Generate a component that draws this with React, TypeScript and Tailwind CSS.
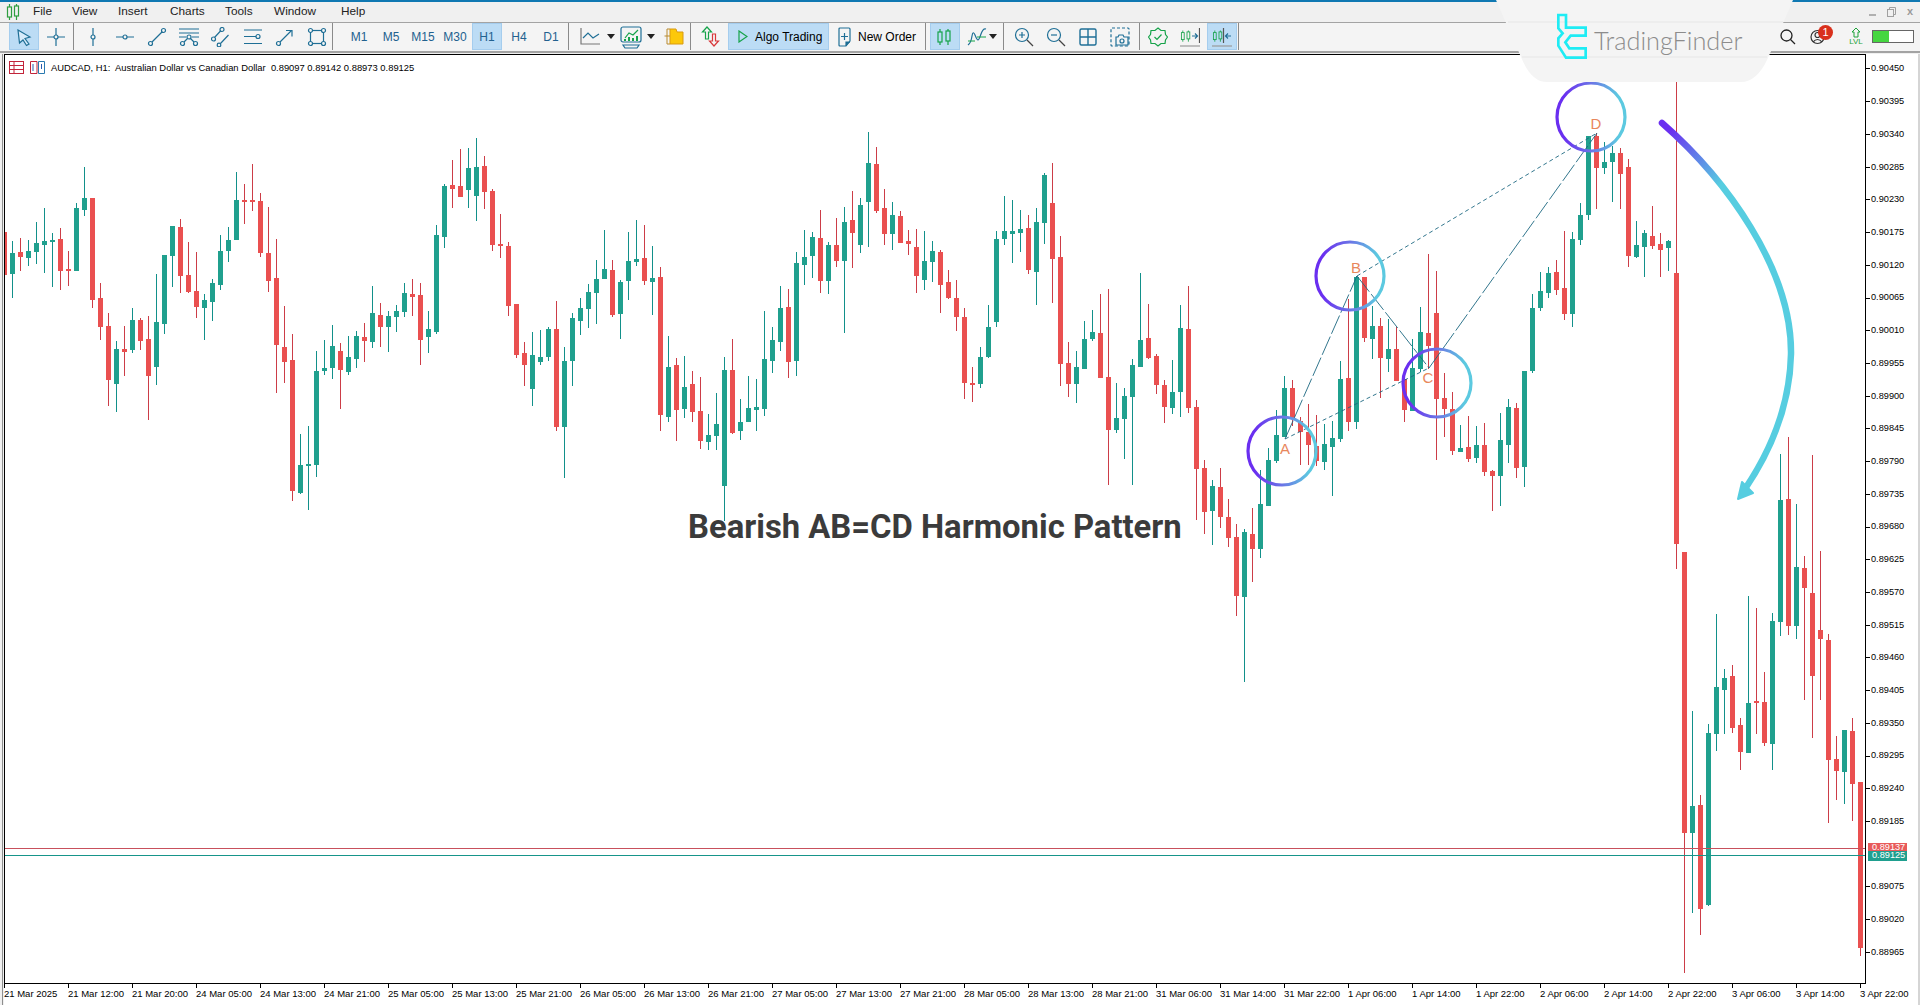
import React from 'react';

type Candle = ['g' | 'r', number, number, number, number];

// candle rows: colour, high, body top, body bottom, low (measured from crops)
const chunks: { y0: number; s: number; rows: Candle[] }[] = [
  {
    y0: 120,
    s: 3,
    rows: [
      ['r',340,340,467,467],['g',366,402,464,536],['r',357,400,413,456],['g',363,396,416,440],['g',309,372,398,434],
      ['g',267,366,377,461],['g',342,364,368,503],['r',327,360,455,512],['r',396,451,455,500],['g',252,267,455,455],
      ['g',144,237,272,290],['r',237,237,542,566],['r',492,537,623,662],['r',582,621,782,860],['g',666,690,794,878],
      ['r',621,690,698,770],['g',567,603,692,701],['r',597,603,665,692],['r',591,660,770,902],['g',465,609,743,797],
      ['g',408,408,614,644],['g',321,321,410,503],['r',300,324,470,521],['r',369,468,519,521],['r',399,516,564,596],
      ['g',525,543,566,662],['g',480,492,548,605],['g',348,396,497,512],['g',324,363,395,428],['g',159,243,362,362],
      ['r',195,243,248,314],['r',135,243,248,275],['r',222,246,401,413],['r',264,402,485,518],['r',360,477,677,821],
      ['r',561,684,728,791],['r',645,723,1115,1145],['g',945,1038,1121,1124],['g',921,1036,1038,1172],['g',696,756,1037,1073],
      ['g',663,747,755,767],['g',618,681,746,779],['r',672,696,752,869],['g',651,714,758,767],['g',636,651,719,746],
      ['r',612,654,666,728],['g',501,582,668,686],['r',552,588,623,683],['g',576,591,623,698],['g',558,576,593,638],
      ['g',492,522,578,593],['r',480,525,533,590],['r',492,528,662,737],['g',576,630,653,701],['g',318,348,638,644],
      ['g',195,201,353,386],['r',123,198,209,266],['r',90,201,233,233],['g',87,147,212,266],['g',57,144,230,305],
      ['r',111,141,218,269],['r',210,216,377,395],['r',285,375,377,416],['r',369,381,560,590],['r',555,555,707,716],
      ['r',669,702,737,800],['g',639,708,809,860],['g',633,714,729,737],['g',624,630,713,725],['r',546,630,923,935],
      ['g',684,726,923,1076],['g',582,597,725,800],['g',537,567,605,647],['g',495,519,569,626],['g',423,480,521,614],
      ['g',333,450,479,479],['r',423,453,587,593],['g',483,489,584,659],['g',339,426,485,542],['g',303,420,428,440],
      ['r',318,417,485,497],['g',381,477,488,587],['r',444,474,887,935],['g',651,744,893,908],['r',717,738,872,965],
      ['g',711,804,869,896],['r',756,795,878,908],['r',774,876,965,989],['g',885,948,968,992],['g',822,915,950,992],
      ['g',714,753,1100,1206],['r',660,753,941,944],['g',840,909,935,962],['g',771,867,908,908],['g',780,864,872,935],
      ['g',576,720,869,890],['g',624,663,725,761],['g',501,567,668,695],['r',510,564,728,776],['g',399,432,725,770],
      ['g',333,414,437,497],['g',339,354,410,476],['r',273,357,485,521],['g',369,378,485,524],['r',297,378,425,443],
      ['g',264,309,425,641],['r',216,303,341,446],['g',237,258,377,401],['g',39,132,248,383],['r',84,135,275,281],
      ['r',210,267,344,377],['g',249,288,344,392],['r',276,291,371,371],['r',333,366,374,407],['r',330,384,470,521],
      ['g',336,426,482,512],['g',366,396,428,488],['r',393,399,497,581],['r',453,489,536,539],['r',483,537,593,635],
      ['r',567,594,791,839],['r',743,792,797,848],['g',684,714,794,806],['g',558,624,714,716],['g',336,360,608,623],
      ['g',231,336,359,377],['g',243,336,344,431],['g',273,330,342,398],['r',288,327,452,464],['g',267,309,458,557],
      ['g',162,168,311,374],['r',132,252,419,551],['r',351,414,734,800],['r',669,732,794,833],['g',696,744,794,851],
      ['g',606,660,749,749],['g',573,639,659,665],['r',525,642,776,776],['r',510,774,932,1097],['g',792,897,932,941],
      ['g',807,831,899,1019],['g',720,738,833,1097],['g',462,663,743,743],['r',555,657,716,719],['r',705,711,797,824],
      ['r',783,798,863,911],['g',723,819,866,884],['g',558,627,818,893],['r',501,630,866,881],
    ],
  },
  {
    y0: 440,
    s: 3,
    rows: [
      ['r',-117,-96,89,242],['r',63,87,218,284],['g',123,141,215,317],['r',87,144,233,266],['r',180,234,296,323],
      ['r',255,294,470,530],['g',270,279,473,728],['r',207,285,329,428],['g',93,195,331,356],['g',27,63,200,200],
    ],
  },
  {
    y0: 60,
    s: 3,
    rows: [
      ['g',1053,1128,1205,1211],['g',951,987,1133,1133],['r',963,987,1078,1100],['r',1075,1085,1120,1217],['r',1035,1120,1157,1217],
      ['r',1068,1160,1205,1220],['g',1095,1155,1208,1232],['g',1086,1137,1163,1310],['g',906,960,1140,1148],['r',720,957,1088,1115],
      ['g',650,654,1088,1109],['r',654,654,836,848],['g',740,801,839,899],['r',777,801,896,1016],['g',780,870,899,938],
      ['r',804,870,965,965],['r',960,960,1052,1088],['g',840,927,1055,1055],['g',744,819,929,938],['r',585,822,860,930],
      ['r',636,762,1019,1202],['r',942,1017,1049,1133],['r',999,1050,1175,1187],['g',1098,1167,1178,1178],['r',1071,1164,1199,1208],
      ['g',1101,1158,1196,1211],['r',1092,1158,1238,1250],['r',1233,1236,1250,1355],['g',1062,1143,1250,1340],['g',1020,1044,1157,1211],
      ['r',1032,1047,1226,1256],['g',936,936,1223,1283],['g',705,747,935,941],['g',639,696,747,755],['g',624,642,702,716],
      ['r',603,639,693,708],['r',516,687,764,782],['g',519,540,764,803],['g',432,468,542,557],['g',230,231,467,482],
      ['r',222,231,326,449],['g',249,309,326,344],['g',260,282,308,428],['r',267,282,344,449],['r',300,324,590,623],
      ['g',486,558,593,596],['g',513,522,563,653],['r',441,531,561,569],['r',522,555,572,653],['g',543,546,566,635],
    ],
  },
  { y0: 0, s: 1, rows: [['r',72,274,545,570]] },
  {
    y0: 440,
    s: 2.775,
    rows: [
      ['r',314,314,1092,1481],['g',755,1019,1092,1314],['r',988,1016,1303,1376],['g',791,816,1293,1297],['g',486,688,820,865],
      ['g',638,663,696,820],['r',627,658,802,815],['r',773,794,868,918],['g',436,733,870,870],['r',468,727,733,820],
      ['r',647,730,844,851],['g',483,505,845,918],['g',42,169,507,546],['r',-6,167,518,543],['g',180,355,518,554],
      ['r',325,358,413,723],['r',44,427,657,829],['r',311,530,554,723],['r',541,558,890,1065],['r',824,888,920,1001],
      ['g',808,808,923,1012],['r',773,810,956,1059],['r',952,952,1412,1434],
    ],
  },
];

const candles = chunks.flatMap((c) =>
  c.rows.map((r) => ({
    up: r[0] === 'g',
    h: Math.round(c.y0 + r[1] / c.s),
    t: Math.round(c.y0 + r[2] / c.s),
    b: Math.round(c.y0 + r[3] / c.s),
    l: Math.round(c.y0 + r[4] / c.s),
  }))
);

const prices = [
  '0.90450','0.90395','0.90340','0.90285','0.90230','0.90175','0.90120','0.90065','0.90010','0.89955',
  '0.89900','0.89845','0.89790','0.89735','0.89680','0.89625','0.89570','0.89515','0.89460','0.89405',
  '0.89350','0.89295','0.89240','0.89185','','0.89075','0.89020','0.88965',
];

const times = [
  '21 Mar 2025','21 Mar 12:00','21 Mar 20:00','24 Mar 05:00','24 Mar 13:00','24 Mar 21:00','25 Mar 05:00','25 Mar 13:00',
  '25 Mar 21:00','26 Mar 05:00','26 Mar 13:00','26 Mar 21:00','27 Mar 05:00','27 Mar 13:00','27 Mar 21:00','28 Mar 05:00',
  '28 Mar 13:00','28 Mar 21:00','31 Mar 06:00','31 Mar 14:00','31 Mar 22:00','1 Apr 06:00','1 Apr 14:00','1 Apr 22:00',
  '2 Apr 06:00','2 Apr 14:00','2 Apr 22:00','3 Apr 06:00','3 Apr 14:00','3 Apr 22:00',
];

const menus = [
  { label: 'File', w: 'w-[39px]' },
  { label: 'View', w: 'w-[46px]' },
  { label: 'Insert', w: 'w-[52px]' },
  { label: 'Charts', w: 'w-[55px]' },
  { label: 'Tools', w: 'w-[49px]' },
  { label: 'Window', w: 'w-[67px]' },
  { label: 'Help', w: 'w-[40px]' },
];

const BLUE = '#1f6f96';
const GREEN = '#16a34a';

function Ico({ children, w = 20, h = 20 }: { children: React.ReactNode; w?: number; h?: number }) {
  return (
    <svg width={w} height={h} viewBox={`0 0 ${w} ${h}`} fill="none" stroke={BLUE} strokeWidth="1.2">
      {children}
    </svg>
  );
}

function Slot({ active, children, className }: { active?: boolean; children: React.ReactNode; className?: string }) {
  return (
    <div className={`flex h-[27px] w-[32px] items-center justify-center ${className ?? ''}`}>
      <div
        className={`flex h-[27px] w-[30px] items-center justify-center border ${
          active ? 'border-[#a5cdee] bg-[#bcdcf5]' : 'border-transparent'
        }`}
      >
        {children}
      </div>
    </div>
  );
}

function Sep({ className }: { className?: string }) {
  return <div className={`h-[27px] w-px bg-[#8a8a8a] ${className ?? ''}`} />;
}

function Caret() {
  return <div className="h-0 w-0 border-x-[4px] border-t-[5px] border-x-transparent border-t-[#222]" />;
}

function TwoCandles({ color = GREEN }: { color?: string }) {
  return (
    <g stroke={color}>
      <path d="M5 2V5M5 15V18M13 2V4M13 14V18" />
      <rect x="3" y="5" width="4" height="10" />
      <rect x="11" y="4" width="4" height="10" />
    </g>
  );
}

export default function App() {
  return (
    <div className="relative flex h-[1005px] w-[1920px] flex-col overflow-hidden bg-[#f0f0f0] text-black [font-family:'Liberation_Sans',sans-serif]">
      {/* window title strip */}
      <div className="h-[2px] bg-[#0f78b2]" />

      {/* menu */}
      <div className="flex h-[20px] items-center pl-[6px] text-[11.8px] text-[#222]">
        <svg width="14" height="16" viewBox="0 0 14 16" fill="none" stroke="#2e9e3f" strokeWidth="1.2" className="mr-[13px]">
          <path d="M3.5 0V3M3.5 13V16M10.5 0V2M10.5 12V16" />
          <rect x="1.5" y="3" width="4" height="10" />
          <rect x="8.5" y="2" width="4" height="10" />
        </svg>
        {menus.map((m) => (
          <span key={m.label} className={m.w}>
            {m.label}
          </span>
        ))}
        <div className="ml-auto flex items-center gap-[11px] pr-[7px] text-[#9a9a9a]">
          <div className="mt-[6px] h-[2px] w-[7px] bg-[#b0b0b0]" />
          <svg width="9" height="10" viewBox="0 0 9 10" fill="none" stroke="#a0a0a0">
            <rect x="0.5" y="2.5" width="6" height="7" />
            <path d="M2.5 2.5V0.5H8.5V7.5H6.5" />
          </svg>
          <span className="text-[11px] font-bold leading-none">x</span>
        </div>
      </div>

      {/* toolbar */}
      <div className="flex h-[32px] items-center border-y border-b-2 border-y-[#a3a3a3] bg-[#f4f4f4] pl-[8px] text-[12px]">
        <Slot active>
          <Ico>
            <path d="M4 3L16 10L11 11.5L15 17L12.5 18.5L9 13L5.5 16Z" fill="#d8ebfa" />
          </Ico>
        </Slot>
        <Slot>
          <Ico>
            <path d="M10 1V8M10 12V19M1 10H8M12 10H19" />
            <circle cx="10" cy="10" r="2" />
          </Ico>
        </Slot>
        <Sep className="ml-[1px] mr-[3px]" />
        <Slot>
          <Ico>
            <path d="M10 1V8M10 12V19" />
            <circle cx="10" cy="10" r="2" />
          </Ico>
        </Slot>
        <Slot>
          <Ico>
            <path d="M1 10H8M12 10H19" />
            <circle cx="10" cy="10" r="2" />
          </Ico>
        </Slot>
        <Slot>
          <Ico>
            <path d="M5 15L15 5" />
            <circle cx="3.5" cy="16.5" r="2" />
            <circle cx="16.5" cy="3.5" r="2" />
          </Ico>
        </Slot>
        <Slot>
          <Ico>
            <path d="M0 2H20M0 6H20M0 10H7M13 10H20M5 15L8.5 11.5M15 15L11.5 11.5" />
            <circle cx="10" cy="10" r="2" />
            <circle cx="3.5" cy="16.5" r="2" />
            <circle cx="16.5" cy="16.5" r="2" />
          </Ico>
        </Slot>
        <Slot>
          <Ico>
            <path d="M3.5 10.5L9.5 4M9.5 16.5L17.5 8" />
            <circle cx="2.5" cy="12" r="2" />
            <circle cx="11" cy="2.5" r="2" />
            <circle cx="8" cy="18" r="1.8" />
          </Ico>
        </Slot>
        <Slot>
          <Ico>
            <path d="M1 3H19M1 9.5H13M1 16.5H19" />
            <circle cx="15" cy="9.5" r="2" />
          </Ico>
        </Slot>
        <Slot>
          <Ico>
            <path d="M5 15L16 4M11 3.5H17V9.5" />
            <circle cx="3.5" cy="16.5" r="2" />
          </Ico>
        </Slot>
        <Slot>
          <Ico>
            <rect x="3.5" y="3.5" width="13" height="13" />
            <circle cx="3.5" cy="3.5" r="2" fill="#f4f4f4" />
            <circle cx="16.5" cy="3.5" r="2" fill="#f4f4f4" />
            <circle cx="3.5" cy="16.5" r="2" fill="#f4f4f4" />
            <circle cx="16.5" cy="16.5" r="2" fill="#f4f4f4" />
          </Ico>
        </Slot>
        <Sep className="mr-[10px] -ml-px" />
        {['M1', 'M5', 'M15', 'M30', 'H1', 'H4', 'D1'].map((t) => (
          <Slot key={t} active={t === 'H1'}>
            <span className="text-[#22618f]">{t}</span>
          </Slot>
        ))}
        <Sep className="mr-[9px] ml-[1px]" />

        <div className="flex w-[37px] items-center gap-[3px]">
          <Ico w={26}>
            <path d="M3 1V17H22" stroke="#777" />
            <path d="M5 11L10 6L15 11L21 7" />
          </Ico>
          <Caret />
        </div>
        <div className="flex w-[42px] items-center gap-[4px] pl-[4px]">
          <Ico w={24} h={24}>
            <rect x="2" y="2" width="20" height="15" rx="2" />
            <path d="M4 20H20L18 23H6Z" />
            <path d="M6 13L10 8L14 10L19 5" stroke={GREEN} />
            <path d="M6 16V14M10 16V12M14 16V13M18 16V11" stroke={GREEN} strokeWidth="2" />
          </Ico>
          <Caret />
        </div>
        <div className="flex w-[33px] items-center justify-center">
          <svg width="20" height="17" viewBox="0 0 20 17">
            <path d="M0.5 8H6M3 1V16M3 1H6M3 16H6" stroke="#b88a30" fill="none" />
            <path d="M6 4V1H12L13 4H19V16H6Z" fill="#fcc80a" stroke="#d99a10" />
          </svg>
        </div>
        <Sep className="mr-[3px]" />
        <Slot>
          <svg width="20" height="22" viewBox="0 0 20 22" fill="none" strokeWidth="1.2">
            <path d="M7 1L2.5 6H5.5V13H8.5V6H11.5Z" stroke={GREEN} />
            <path d="M14 20L18.5 15H15.5V8H12.5V15H9.5Z" stroke="#d8383a" />
          </svg>
        </Slot>
        <div className="ml-[2px] flex h-[27px] w-[101px] items-center gap-[7px] border border-[#a5cdee] bg-[#bcdcf5] pl-[9px]">
          <svg width="10" height="13" viewBox="0 0 10 13" fill="none" stroke={GREEN} strokeWidth="1.2">
            <path d="M1 1L9 6.5L1 12Z" />
          </svg>
          <span className="whitespace-nowrap">Algo Trading</span>
        </div>
        <div className="flex h-[27px] w-[96px] items-center gap-[7px] pl-[9px]">
          <svg width="13" height="20" viewBox="0 0 13 20" fill="none" stroke={BLUE} strokeWidth="1.2">
            <path d="M2 1H11Q12 1 12 2V14L8 19H2Q1 19 1 18V2Q1 1 2 1Z" />
            <path d="M6.5 6V13M3 9.5H10" />
            <path d="M8 19V15H12" fill={BLUE} />
          </svg>
          <span className="whitespace-nowrap">New Order</span>
        </div>
        <Sep />
        <Slot active className="ml-[3px]">
          <Ico>
            <TwoCandles />
          </Ico>
        </Slot>
        <div className="flex w-[40px] items-center gap-[2px] pl-[6px]">
          <Ico>
            <path d="M1 18Q4 16 5 9Q6 3 8 8T11 13T14 7T19 2" stroke={BLUE} />
            <path d="M1 14H8M10 10H19" stroke={GREEN} />
          </Ico>
          <Caret />
        </div>
        <Sep className="mr-[4px] ml-[2px]" />
        <Slot>
          <Ico>
            <circle cx="8" cy="8" r="6.5" />
            <path d="M5 8H11M8 5V11" />
            <path d="M13 13L19 19" stroke="#444" />
          </Ico>
        </Slot>
        <Slot>
          <Ico>
            <circle cx="8" cy="8" r="6.5" />
            <path d="M5 8H11" />
            <path d="M13 13L19 19" stroke="#444" />
          </Ico>
        </Slot>
        <Slot>
          <Ico>
            <rect x="2" y="2" width="16" height="16" rx="1.5" strokeWidth="1.4" />
            <path d="M10 2V18M2 10H18" strokeWidth="1.4" />
          </Ico>
        </Slot>
        <Slot>
          <Ico>
            <rect x="1" y="1" width="18" height="18" rx="1" strokeDasharray="3 2" />
            <path d="M6 18V10H8L9 8H13L14 10H18V18Z" fill="#f4f4f4" />
            <circle cx="12" cy="14" r="2" />
          </Ico>
        </Slot>
        <Sep className="mr-[2px] ml-[3px]" />
        <Slot>
          <Ico>
            <path
              d="M10 1L13 3.5L17 3.5L17.5 7.5L19.5 10L17.5 13L17 16.5L13 16.5L10 19L7 16.5L3 16.5L2.5 13L0.5 10L2.5 7.5L3 3.5L7 3.5Z"
              stroke={GREEN}
            />
            <path d="M6.5 10L9 12.5L13.5 7.5" stroke={GREEN} />
          </Ico>
        </Slot>
        <Slot>
          <Ico>
            <g transform="scale(0.7) translate(-1 3)">
              <TwoCandles />
            </g>
            <path d="M12 9H17M15 6.5L17.5 9L15 11.5" />
            <path d="M19.5 1V16" stroke="#555" />
            <path d="M0 19H20" stroke="#999" />
          </Ico>
        </Slot>
        <Slot active>
          <Ico>
            <g transform="scale(0.7) translate(-1 3)">
              <TwoCandles />
            </g>
            <path d="M19 9H14M16 6.5L13.5 9L16 11.5" />
            <path d="M11.5 1V16" stroke="#555" />
            <path d="M0 19H20" stroke="#999" />
          </Ico>
        </Slot>
        <Sep />

        {/* right side status */}
        <div className="ml-auto flex items-center pr-[6px]">
          <svg width="16" height="16" viewBox="0 0 16 16" fill="none" stroke="#222" strokeWidth="1.3" className="mr-[14px]">
            <circle cx="6.5" cy="6.5" r="5.5" />
            <path d="M10.5 10.5L15 15" />
          </svg>
          <div className="relative mr-[24px] h-[16px] w-[15px]">
            <svg width="15" height="16" viewBox="0 0 15 16" fill="none" stroke="#333" strokeWidth="1.2">
              <circle cx="7.5" cy="8" r="6.5" />
              <circle cx="7.5" cy="6" r="2.5" />
              <path d="M3 13Q7.5 8 12 13" />
            </svg>
            <div className="absolute -top-[4px] left-[8px] flex h-[15px] w-[15px] items-center justify-center rounded-full bg-[#d9301c] text-[11px] text-white">
              1
            </div>
          </div>
          <div className="mr-[9px] flex w-[14px] flex-col items-center leading-none text-[#1ea33a]">
            <svg width="10" height="11" viewBox="0 0 10 11" fill="none" stroke="#1ea33a">
              <path d="M5 1L1 5H3V10H7V5H9Z" />
            </svg>
            <span className="text-[8px]">LVL</span>
          </div>
          <div className="flex h-[13px] w-[42px] border border-[#666] bg-white">
            <div className="w-[16px] bg-[#45d640]" />
          </div>
        </div>
      </div>

      <div className="h-px" />

      {/* chart window */}
      <div className="flex flex-1 bg-white">
        <div className="flex h-full w-[4px] shrink-0 bg-[#f0f0f0]">
          <div className="ml-[2px] w-px bg-[#8e8e8e]" />
        </div>
        <div className="flex w-[1862px] shrink-0 flex-col">
          <div className="relative h-[930px] w-[1862px] border border-black bg-white">
            <svg width="1860" height="928" viewBox="5 56 1860 928" className="block">
              <defs>
                <linearGradient id="ring" x1="0" y1="0" x2="1" y2="0">
                  <stop offset="0.1" stopColor="#6a2ff0" />
                  <stop offset="0.5" stopColor="#6b74e6" />
                  <stop offset="0.9" stopColor="#5cc9e0" />
                </linearGradient>
                <linearGradient id="sweep" gradientUnits="userSpaceOnUse" x1="1664" y1="126" x2="1722" y2="184">
                  <stop offset="0.1" stopColor="#6a2ff0" />
                  <stop offset="1" stopColor="#56cde0" />
                </linearGradient>
              </defs>

              <g shapeRendering="crispEdges">
                {candles.map((c, i) => (
                  <g key={i}>
                    <rect x={4 + 8 * i} y={c.h} width="1" height={Math.max(c.l - c.h, 1)} fill={c.up ? '#12908a' : '#cc3d47'} />
                    <rect x={2 + 8 * i} y={c.t} width="5" height={Math.max(c.b - c.t, 2)} fill={c.up ? '#20a08e' : '#ea5050'} />
                  </g>
                ))}
                <rect x="5" y="849" width="1860" height="1" fill="#c8505c" />
                <rect x="5" y="856" width="1860" height="1" fill="#16958a" />
              </g>

              {/* pattern legs */}
              <g stroke="#1b6780" strokeWidth="0.9" fill="none">
                <path d="M1285 440L1357 277" strokeDasharray="20 3" />
                <path d="M1357 277L1429 369" strokeDasharray="20 3" />
                <path d="M1429 369L1597 134" strokeDasharray="20 3" />
                <path d="M1285 440L1429 369" strokeDasharray="4 3" />
                <path d="M1357 277L1597 134" strokeDasharray="4 3" />
              </g>

              <g fill="none" stroke="url(#ring)" strokeWidth="3.2">
                <circle cx="1282" cy="452" r="34" />
                <circle cx="1350" cy="277" r="34" />
                <circle cx="1437" cy="384" r="34" />
                <circle cx="1591" cy="118" r="34" />
              </g>

              <g fill="#e8875c" fontSize="15" textAnchor="middle" fontFamily="'Liberation Sans', sans-serif">
                <text x="1285" y="455">A</text>
                <text x="1356" y="274">B</text>
                <text x="1428" y="384">C</text>
                <text x="1596" y="130">D</text>
              </g>

              {/* sweep arrow */}
              <path d="M1662 124C1726 180 1792 270 1791 355C1790 405 1772 450 1745 490" fill="none" stroke="url(#sweep)" strokeWidth="6.5" strokeLinecap="round" />
              <path d="M1742 483L1753 494L1738 500Z" fill="#56cde0" stroke="#56cde0" strokeWidth="2" strokeLinejoin="round" />
            </svg>

            {/* chart caption */}
            <div className="absolute left-[4px] top-[6px] flex items-center whitespace-nowrap text-[9.4px] leading-none">
              <svg width="15" height="13" viewBox="0 0 15 13" fill="none" stroke="#c2243a" className="mr-[6px]">
                <rect x="0.5" y="0.5" width="14" height="12" />
                <path d="M0.5 4.5H14.5M0.5 8.5H14.5M5 0.5V12.5" stroke="#c2243a" />
              </svg>
              <svg width="15" height="13" viewBox="0 0 15 13" fill="none" stroke="#c2243a" className="mr-[6px]">
                <path d="M0.5 12.5V0.5H7V12.5Z" />
                <path d="M8.5 12.5V0.5H14.5V12.5Z" stroke="#2a7ab0" />
                <path d="M3 3V10M11.5 3V8" stroke="#2a5db0" />
              </svg>
              <span className="whitespace-pre">AUDCAD, H1:  Australian Dollar vs Canadian Dollar  0.89097 0.89142 0.88973 0.89125</span>
            </div>

            <div className="absolute left-[683px] top-[451px] whitespace-nowrap text-[32.8px] font-bold leading-[42px] text-[#3b3b3b] [font-family:Roboto,sans-serif]">
              Bearish AB=CD Harmonic Pattern
            </div>
          </div>

          {/* time scale */}
          <div className="flex h-[21px] text-[9.5px] leading-none">
            {times.map((t) => (
              <div key={t} className="relative w-[64px] shrink-0">
                <div className="h-[4px] w-px bg-black" />
                <span className="absolute left-0 top-[5px] whitespace-nowrap">{t}</span>
              </div>
            ))}
          </div>
        </div>

        {/* price scale */}
        <div className="relative flex w-[52px] shrink-0 flex-col text-[9.2px] leading-none">
          <div className="-mt-[1.4px] flex flex-col">
            {prices.map((p, i) => (
              <div key={i} className="flex h-[32.72px] items-center">
                {p && <div className="mr-[1px] h-px w-[4px] bg-black" />}
                {p}
              </div>
            ))}
          </div>
          <div className="absolute left-[2px] top-[789px] h-[8px] w-[39px] overflow-hidden bg-[#e85a5a] pl-[4px] text-white">
            0.89137
          </div>
          <div className="absolute left-[2px] top-[797px] flex h-[10px] w-[39px] items-center bg-[#1f9f8f] pl-[4px] text-white">
            0.89125
          </div>
        </div>
        <div className="ml-auto w-[2px] bg-[#d5d5d5]" />
      </div>

      {/* watermark over the toolbar */}
      <div className="absolute left-[1490px] top-0">
        <svg width="310" height="84" viewBox="1490 0 310 84">
          <path d="M1496 0L1521 57Q1531 82 1547 82H1741Q1757 82 1768 58L1793 0Z" fill="#f4f4f4" />
          <path d="M1508 22H1783M1522 57H1767" stroke="#e6e6e6" />
          <g transform="translate(1540 5) scale(0.3333)" fill="none" stroke="#1fecf4" strokeWidth="8">
            <path d="M55 30H78V68H137V92H92L76 112L88 130H137V158H78L55 122V100L68 85L55 70Z" />
          </g>
        </svg>
        <span className="absolute left-[104px] top-[24px] whitespace-nowrap text-[25.3px] font-light leading-[32px] text-[#8c8c8c] [font-family:Lato,sans-serif]">
          TradingFinder
        </span>
      </div>
    </div>
  );
}
